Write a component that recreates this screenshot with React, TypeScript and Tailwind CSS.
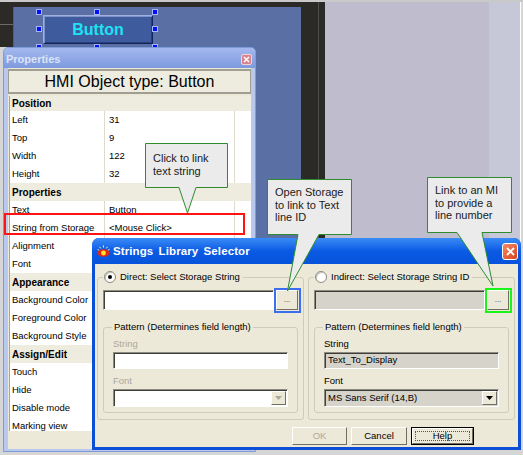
import React from "react";

const FONT = "font-['Liberation_Sans',Arial,sans-serif]";

type Row = { name: string; value?: string; cat?: boolean };

const rows: Row[] = [
  { name: "Position", cat: true },
  { name: "Left", value: "31" },
  { name: "Top", value: "9" },
  { name: "Width", value: "122" },
  { name: "Height", value: "32" },
  { name: "Properties", cat: true },
  { name: "Text", value: "Button" },
  { name: "String from Storage", value: "<Mouse Click>" },
  { name: "Alignment" },
  { name: "Font" },
  { name: "Appearance", cat: true },
  { name: "Background Color" },
  { name: "Foreground Color" },
  { name: "Background Style" },
  { name: "Assign/Edit", cat: true },
  { name: "Touch" },
  { name: "Hide" },
  { name: "Disable mode" },
  { name: "Marking view" },
];

const handles = [
  [25, 5], [83, 5], [141, 5],
  [25, 22], [141, 22],
  [25, 40], [83, 40], [141, 40],
];

const raised = "border border-white border-b-[#716f64] border-r-[#716f64] bg-[#ece9d8]";
const sunken = "border border-[#8d8b80] border-b-white border-r-white shadow-[inset_1px_1px_0_#3f3f3a]";

function Radio({ checked }: { checked?: boolean }) {
  return (
    <span className="flex h-[12px] w-[12px] items-center justify-center rounded-full border border-[#8d8b80] bg-white shadow-[inset_1px_1px_0_#c9c6b8]">
      {checked && <span className="h-[4px] w-[4px] rounded-full bg-black" />}
    </span>
  );
}

function Dots() {
  return (
    <div className={`flex h-[20px] w-[22px] items-end justify-center pb-[5px] text-[8px] leading-none text-[#444] ${raised}`}>...</div>
  );
}

function Select({ text, disabled }: { text?: string; disabled?: boolean }) {
  return (
    <div className={`mt-[3px] flex h-[18px] ${sunken} ${disabled ? "bg-white" : "bg-[#d6d3ca]"}`}>
      <div className="flex flex-1 items-center pl-[3px]">{text}</div>
      <div className={`m-px flex w-[15px] items-center justify-center ${raised}`}>
        <svg width="7" height="4" viewBox="0 0 7 4">
          <path d="M0 0h7L3.5 4z" fill={disabled ? "#aca899" : "#000"} />
        </svg>
      </div>
    </div>
  );
}

function Group({
  label,
  checked,
  disabled,
  ring,
  stringValue,
  fontValue,
}: {
  label: string;
  checked?: boolean;
  disabled?: boolean;
  ring: string;
  stringValue?: string;
  fontValue?: string;
}) {
  const labelColor = disabled ? "text-[#aca899]" : "text-black";
  return (
    <fieldset className="h-[149px] w-[207px] rounded-[3px] border border-[#cfccbd] px-[5px]">
      <legend className="flex h-[12px] items-center gap-[4px] pl-px pr-[3px]">
        <Radio checked={checked} />
        <span>{label}</span>
      </legend>
      <div className="mt-[7px] flex h-[20px] gap-[2px]">
        <div className={`flex-1 ${sunken} ${disabled ? "bg-white" : "bg-[#d6d3ca]"}`} />
        <div className="relative">
          <Dots />
          <div className={`absolute -bottom-[3px] -left-[2px] -right-[3px] -top-[2px] ${ring}`} />
        </div>
      </div>
      <fieldset className="mt-[11px] h-[92px] rounded-[3px] border border-[#cfccbd] px-[9px]">
        <legend className="ml-[-1px] h-[12px] px-[2px] leading-[12px]">Pattern (Determines field length)</legend>
        <div className={`mt-[5px] h-[11px] leading-[11px] ${labelColor}`}>String</div>
        <div className={`mt-[3px] flex h-[17px] items-center pl-[3px] ${sunken} ${disabled ? "bg-white" : "bg-[#d6d3ca]"}`}>
          {stringValue}
        </div>
        <div className={`mt-[6px] h-[11px] leading-[11px] ${labelColor}`}>Font</div>
        <Select text={fontValue} disabled={disabled} />
      </fieldset>
    </fieldset>
  );
}

export default function App() {
  return (
    <div className={`relative h-[455px] w-[523px] overflow-hidden bg-[#d6d6d6] text-black ${FONT}`}>
      {/* editor backdrop */}
      <div className="flex h-[450px] flex-col">
        <div className="h-[2px] bg-[#c9c9c9]" />
        <div className="flex flex-1">
          <div className="h-[45px] w-[13px] bg-[#2b2a26] pt-[22px]">
            <div className="h-px bg-[#6b6a66]" />
          </div>
          <div className="w-[288px] bg-[#2b2a26] pt-[5px]">
            <div className="relative h-full border-l border-[#4a5d8e] bg-[#5a70a5]">
              <div className="absolute left-[29px] top-[8px] flex h-[29px] w-[110px] items-center justify-center border border-[#9fb0dc] border-b-[#15245c] border-r-[#15245c] bg-[#3d5b9d] shadow-[inset_1px_1px_0_#7d92c8,inset_-1px_-1px_0_#26407e]">
                <span className="text-[16px] font-bold text-[#1fe2f2]">Button</span>
              </div>
              {handles.map(([x, y]) => (
                <div
                  key={`${x}-${y}`}
                  className="absolute h-[6px] w-[6px] border border-[#a9b4ff] bg-[#0012f2]"
                  style={{ left: x - 3, top: y - 3 }}
                />
              ))}
            </div>
          </div>
          <div className="flex w-[24px] justify-end bg-[#2b2a26] pr-[6px]">
            <div className="w-px bg-[#4f4e4a]" />
          </div>
          <div className="w-[164px] bg-[#bebccd]" />
          <div className="w-[31px] bg-[#c6c7d7]" />
          <div className="w-px bg-white" />
        </div>
      </div>

      {/* Properties window */}
      <div className="absolute left-[3px] top-[47px] flex h-[405px] w-[253px] flex-col rounded-t-[5px] border border-[#7f9ad8] bg-[#b9c8ee] px-[4px] pb-[2px]">
        <div className="-mx-[4px] flex h-[20px] items-center justify-between rounded-t-[5px] bg-gradient-to-b from-[#a3b8ee] to-[#7e9ade] pl-[2px] pr-[3px] pt-[3px]">
          <span className="text-[11px] font-bold text-[#dbe3f7]">Properties</span>
          <span className="flex h-[11px] w-[11px] items-center justify-center rounded-[2px] border border-[#f1d3d8] bg-[#d8838d]">
            <svg width="7" height="7" viewBox="0 0 7 7">
              <path d="M1 1l5 5M6 1L1 6" stroke="#fff" strokeWidth="1.6" />
            </svg>
          </span>
        </div>
        <div className="flex flex-1 flex-col bg-[#ece9d8]">
          <div className="mt-[1px] flex h-[25px] items-center justify-center border-x border-y-2 border-[#a09e92] bg-[#eeebdf] text-[16px]">
            HMI Object type: Button
          </div>
          <div className="ml-[1px] mt-[2px] h-[335px] overflow-hidden border-l border-[#a7a493] bg-white text-[9.5px]">
            {rows.map((r, i) =>
              r.cat ? (
                <div
                  key={r.name}
                  className={`flex items-center bg-[#eeebdf] pl-[2px] text-[10px] font-bold ${i === 0 ? "h-[15px]" : "h-[18px]"}`}
                >
                  {r.name}
                </div>
              ) : (
                <div key={r.name} className="flex h-[18px]">
                  <div className="flex w-[94px] items-center whitespace-nowrap pl-[2px]">{r.name}</div>
                  <div className="flex w-[130px] items-center border-l border-[#dedbcc] pl-[4px]">{r.value}</div>
                  <div className="flex-1 border-l border-[#dedbcc]" />
                </div>
              ),
            )}
          </div>
        </div>
      </div>

      {/* highlight of the storage row */}
      <div className="absolute left-[4px] top-[213px] h-[22px] w-[241px] border-2 border-[#ff1414]" />

      {/* Strings Library Selector dialog */}
      <div className="absolute left-[92px] top-[238px] flex h-[212px] w-[429px] flex-col rounded-t-[7px] bg-[#0a4fd6] px-[3px] pb-[3px]">
        <div className="-mx-[3px] flex h-[26px] items-center rounded-t-[7px] bg-gradient-to-b from-[#3a8bf7] via-[#0a5ae4] to-[#0753db] pl-[5px] pr-[3px]">
          <svg width="13" height="13" viewBox="0 0 13 13">
            <path d="M6.5 0.5v2M2.5 1.8l1.2 1.6M10.5 1.8L9.3 3.4M0.5 4.5l1.8 0.8M12.5 4.5l-1.8 0.8" stroke="#fff6a0" strokeWidth="1" />
            <ellipse cx="6.5" cy="8" rx="6" ry="3.8" fill="#e3261c" />
            <circle cx="6.5" cy="8" r="2.4" fill="#ffe22a" />
          </svg>
          <span className="ml-[3px] pt-[2px] text-[11.5px] font-bold tracking-[0.1px] text-white [word-spacing:2px]">Strings Library Selector</span>
          <span className="ml-auto flex h-[17px] w-[16px] items-center justify-center rounded-[3px] border border-white bg-gradient-to-br from-[#f08a64] to-[#d9401a]">
            <svg width="9" height="9" viewBox="0 0 9 9">
              <path d="M1 1l7 7M8 1L1 8" stroke="#fff" strokeWidth="1.8" />
            </svg>
          </span>
        </div>
        <div className="flex flex-1 flex-col bg-[#ece9d8] px-[2px] pt-[7px] text-[9.5px]">
          <div className="flex gap-[4px]">
            <Group
              label="Direct: Select Storage String"
              checked
              disabled
              ring="border-2 border-[#3c6ff0]"
            />
            <Group
              label="Indirect: Select Storage String ID"
              ring="border-2 border-[#19f519]"
              stringValue="Text_To_Display"
              fontValue="MS Sans Serif (14,B)"
            />
          </div>
          <div className="mt-[7px] flex justify-end gap-[4px] pr-[42px]">
            <div className={`flex h-[18px] w-[55px] items-center justify-center text-[#aca899] ${raised}`}>OK</div>
            <div className={`flex h-[18px] w-[56px] items-center justify-center ${raised}`}>Cancel</div>
            <div className="flex h-[18px] w-[63px] border border-black">
              <div className={`flex flex-1 p-[2px] ${raised}`}>
                <div className="flex flex-1 items-center justify-center border border-dotted border-[#555]">Help</div>
              </div>
            </div>
          </div>
        </div>
      </div>

      {/* callouts */}
      <svg className="pointer-events-none absolute left-0 top-0" width="523" height="455">
        <path d="M145.5 143.5H227.5V187.5H196L187.5 213L179 187.5H145.5Z" fill="#ebebeb" stroke="#2e8b2e" />
        <path d="M267.5 179.5H351.5V234.5H319L287.5 291L298 234.5H267.5Z" fill="#ebebeb" stroke="#2e8b2e" />
        <path d="M427.5 177.5H511.5V232.5H482L493 286L457 232.5H427.5Z" fill="#ebebeb" stroke="#2e8b2e" />
      </svg>
      <div className="absolute left-[153px] top-[152px] text-[11px] leading-[13px] text-[#1a1a1a]">
        Click to link
        <br />
        text string
      </div>
      <div className="absolute left-[275px] top-[186px] text-[11px] leading-[12.5px] text-[#1a1a1a]">
        Open Storage
        <br />
        to link to Text
        <br />
        line ID
      </div>
      <div className="absolute left-[435px] top-[184px] text-[11px] leading-[12.5px] text-[#1a1a1a]">
        Link to an MI
        <br />
        to provide a
        <br />
        line number
      </div>
    </div>
  );
}
